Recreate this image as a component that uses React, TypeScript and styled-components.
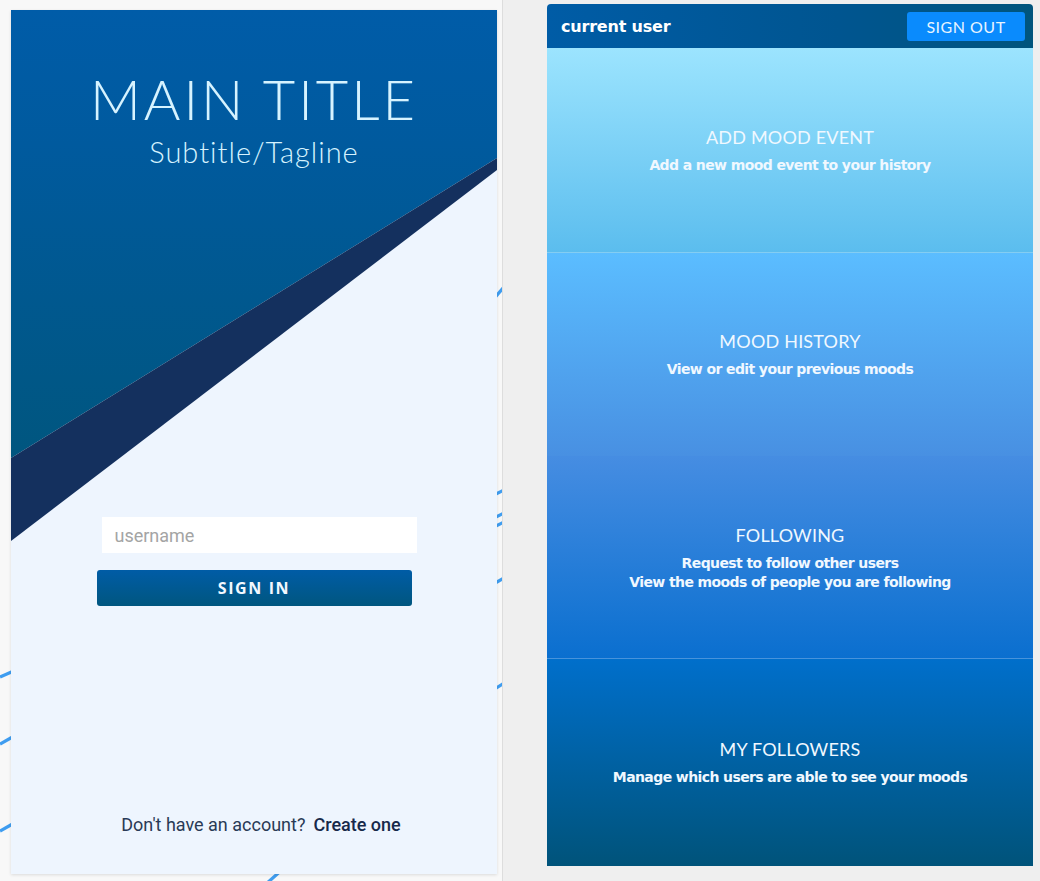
import React from 'react';
import styled, {createGlobalStyle} from 'styled-components';

const GlobalStyle = createGlobalStyle`
  html, body {
    margin: 0;
    padding: 0;
    width: 1040px;
    height: 881px;
    overflow: hidden;
    font-family: Roboto, "Liberation Sans", sans-serif;
  }
`

const sections = [
    {
        title: 'ADD MOOD EVENT',
        lines: ['Add a new mood event to your history'],
        from: '#9ce4fe',
        to: '#5bbdee',
        divider: true,
        grow: 205,
    },
    {
        title: 'MOOD HISTORY',
        lines: ['View or edit your previous moods'],
        from: '#5bbdff',
        to: '#4890e2',
        divider: false,
        grow: 203,
    },
    {
        title: 'FOLLOWING',
        lines: ['Request to follow other users', 'View the moods of people you are following'],
        from: '#468de2',
        to: '#0a6fcf',
        divider: true,
        grow: 203,
    },
    {
        title: 'MY FOLLOWERS',
        lines: ['Manage which users are able to see your moods'],
        from: '#006fcb',
        to: '#00537a',
        divider: false,
        grow: 207,
    },
]

// little pieces of the background stripes that peek out round the login card
const strokes = [
    [0, 677, 16, 670],
    [0, 744, 16, 735],
    [0, 831, 16, 822],
    [492, 301, 504, 287],
    [490, 497, 504, 490],
    [490, 520, 504, 513],
    [490, 529, 504, 522],
    [490, 586, 504, 578],
    [490, 692, 504, 683],
    [266, 884, 284, 868],
]

export default function App() {
    return (
        <>
            <GlobalStyle/>
            <Page>
                <LoginPane>
                    <Stripes width="502" height="881" viewBox="0 0 502 881">
                        {strokes.map(([x1, y1, x2, y2], i) => (
                            <line key={i} x1={x1} y1={y1} x2={x2} y2={y2}
                                  stroke="#3f9df0" strokeWidth="3.2"/>
                        ))}
                    </Stripes>
                    <LoginCard>
                        <Hero width="486" height="864" viewBox="0 0 486 864">
                            <defs>
                                <linearGradient id="heroFill" x1="0" y1="0" x2="0" y2="1">
                                    <stop offset="0" stopColor="#005ca8"/>
                                    <stop offset="0.3" stopColor="#005a9e"/>
                                    <stop offset="1" stopColor="#00567f"/>
                                </linearGradient>
                            </defs>
                            <polygon points="0,0 486,0 486,148 0,448" fill="url(#heroFill)"/>
                            <polygon points="0,448 486,148 486,160 0,531" fill="#14305e"/>
                        </Hero>
                        <TitleBlock>
                            <MainTitle>MAIN TITLE</MainTitle>
                            <Tagline>Subtitle/Tagline</Tagline>
                        </TitleBlock>
                        <Form>
                            <UserInput type="text" placeholder="username"/>
                            <SignInButton>SIGN IN</SignInButton>
                        </Form>
                        <Footer>
                            Don't have an account?<CreateLink>Create one</CreateLink>
                        </Footer>
                    </LoginCard>
                </LoginPane>
                <MenuPane>
                    <MenuPanel>
                        <Header>
                            <UserName>current user</UserName>
                            <SignOutButton>SIGN OUT</SignOutButton>
                        </Header>
                        {sections.map(s => (
                            <Section key={s.title} $from={s.from} $to={s.to}
                                     $divider={s.divider} $grow={s.grow}>
                                <SectionTitle>{s.title}</SectionTitle>
                                {s.lines.map(line => <SectionText key={line}>{line}</SectionText>)}
                            </Section>
                        ))}
                    </MenuPanel>
                </MenuPane>
            </Page>
        </>
    )
}

const Page = styled.div`
  display: flex;
  width: 1040px;
  height: 881px;
`

const LoginPane = styled.div`
  position: relative;
  width: 503px;
  flex-shrink: 0;
  box-sizing: border-box;
  padding: 10px 0 0 11px;
  background: #f8f8f8;
  border-right: 1px solid #dddddd;
  overflow: hidden;
`

const Stripes = styled.svg`
  position: absolute;
  top: 0;
  left: 0;
`

const LoginCard = styled.div`
  position: relative;
  width: 486px;
  height: 864px;
  background: #eef5fe;
  box-shadow: 0 1px 3px rgba(0, 0, 0, 0.12);
  display: flex;
  flex-direction: column;
  align-items: center;
`

const Hero = styled.svg`
  position: absolute;
  top: 0;
  left: 0;
`

const TitleBlock = styled.div`
  position: relative;
  display: flex;
  flex-direction: column;
  align-items: center;
  padding-top: 56px;
  color: #d6f3ff;
  font-family: Lato, "Open Sans", sans-serif;
  font-weight: 300;
`

const MainTitle = styled.h1`
  margin: 0;
  font-size: 56px;
  font-weight: 300;
  line-height: 66px;
  letter-spacing: 3px;
`

const Tagline = styled.div`
  font-size: 29px;
  line-height: 40px;
  letter-spacing: 1px;
`

const Form = styled.div`
  position: relative;
  margin-top: 345px;
  display: flex;
  flex-direction: column;
  align-items: center;
  gap: 17px;
`

const UserInput = styled.input`
  width: 315px;
  height: 36px;
  box-sizing: border-box;
  margin-left: 10px;
  border: none;
  outline: none;
  background: #ffffff;
  padding: 0 13px;
  font-family: Roboto, sans-serif;
  font-size: 18px;
  color: #333;

  &::placeholder {
    color: #a4a4a4;
  }
`

const SignInButton = styled.button`
  width: 315px;
  height: 36px;
  border: none;
  border-radius: 3px;
  background: linear-gradient(to bottom, #005ca6, #00567f);
  color: #f2f8ff;
  font-family: "Open Sans", sans-serif;
  font-weight: 700;
  font-size: 16px;
  letter-spacing: 1.6px;
`

const Footer = styled.div`
  position: relative;
  margin-top: auto;
  margin-bottom: 39px;
  margin-left: 14px;
  font-family: Roboto, sans-serif;
  font-size: 18px;
  color: #293a56;
`

const CreateLink = styled.span`
  margin-left: 8px;
  font-weight: 500;
  color: #17294a;
`

const MenuPane = styled.div`
  flex: 1;
  background: #efefef;
  padding: 4px 0 0 44px;
`

const MenuPanel = styled.div`
  width: 486px;
  height: 862px;
  display: flex;
  flex-direction: column;
  border-radius: 4px 4px 0 0;
  overflow: hidden;
`

const Header = styled.div`
  height: 44px;
  flex-shrink: 0;
  display: flex;
  align-items: center;
  justify-content: space-between;
  padding: 0 8px 0 14px;
  background: linear-gradient(to right, #005ca6, #005590 60%, #00557d);
`

const UserName = styled.div`
  color: #ffffff;
  font-family: "DejaVu Sans", Verdana, sans-serif;
  font-weight: 700;
  font-size: 16px;
  letter-spacing: -0.2px;
`

const SignOutButton = styled.button`
  width: 118px;
  height: 29px;
  border: none;
  border-radius: 3px;
  background: #0a8bfd;
  color: #e8f4ff;
  font-family: Lato, sans-serif;
  font-size: 16px;
  letter-spacing: 0.5px;
`

const Section = styled.div<{ $from: string, $to: string, $divider: boolean, $grow: number }>`
  flex: ${p => p.$grow} 1 0;
  display: flex;
  flex-direction: column;
  align-items: center;
  justify-content: center;
  background: linear-gradient(to bottom, ${p => p.$from}, ${p => p.$to});
  box-shadow: ${p => p.$divider ? 'inset 0 -1px 0 rgba(255, 255, 255, 0.25)' : 'none'};
  color: #f0f8ff;
  text-align: center;
`

const SectionTitle = styled.div`
  font-family: Lato, sans-serif;
  font-size: 18px;
  letter-spacing: 0.2px;
  margin-bottom: 8px;
`

const SectionText = styled.div`
  font-family: "DejaVu Sans", Verdana, sans-serif;
  font-weight: 700;
  font-size: 14px;
  line-height: 19px;
  letter-spacing: -0.6px;
`
